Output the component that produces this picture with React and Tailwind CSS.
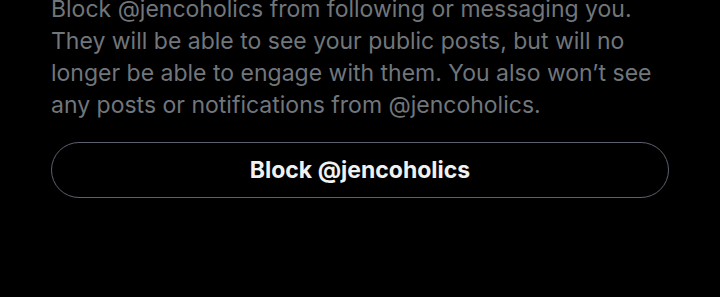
import React from 'react';

const App = () => {
  return (
    <div className="w-[720px] h-[297px] bg-black overflow-hidden" style={{ fontFamily: 'Inter, "Noto Sans", sans-serif' }}>
      <div className="pl-[51px] pr-[51px] -mt-[7px]">
        {/* Texte d'explication */}
        <p className="text-[23px] leading-[32px] text-[#71767b]">
          Block @jencoholics from following or messaging you. They will be able to see your public posts, but will no longer be able to engage with them. You also won’t see any posts or notifications from @jencoholics.
        </p>
        <button className="mt-[21px] w-full h-[56px] rounded-full border border-[#5c6170] text-[#eff1f2] text-[23px] font-bold flex items-center justify-center">
          Block @jencoholics
        </button>
      </div>
    </div>
  );
};

export default App;
